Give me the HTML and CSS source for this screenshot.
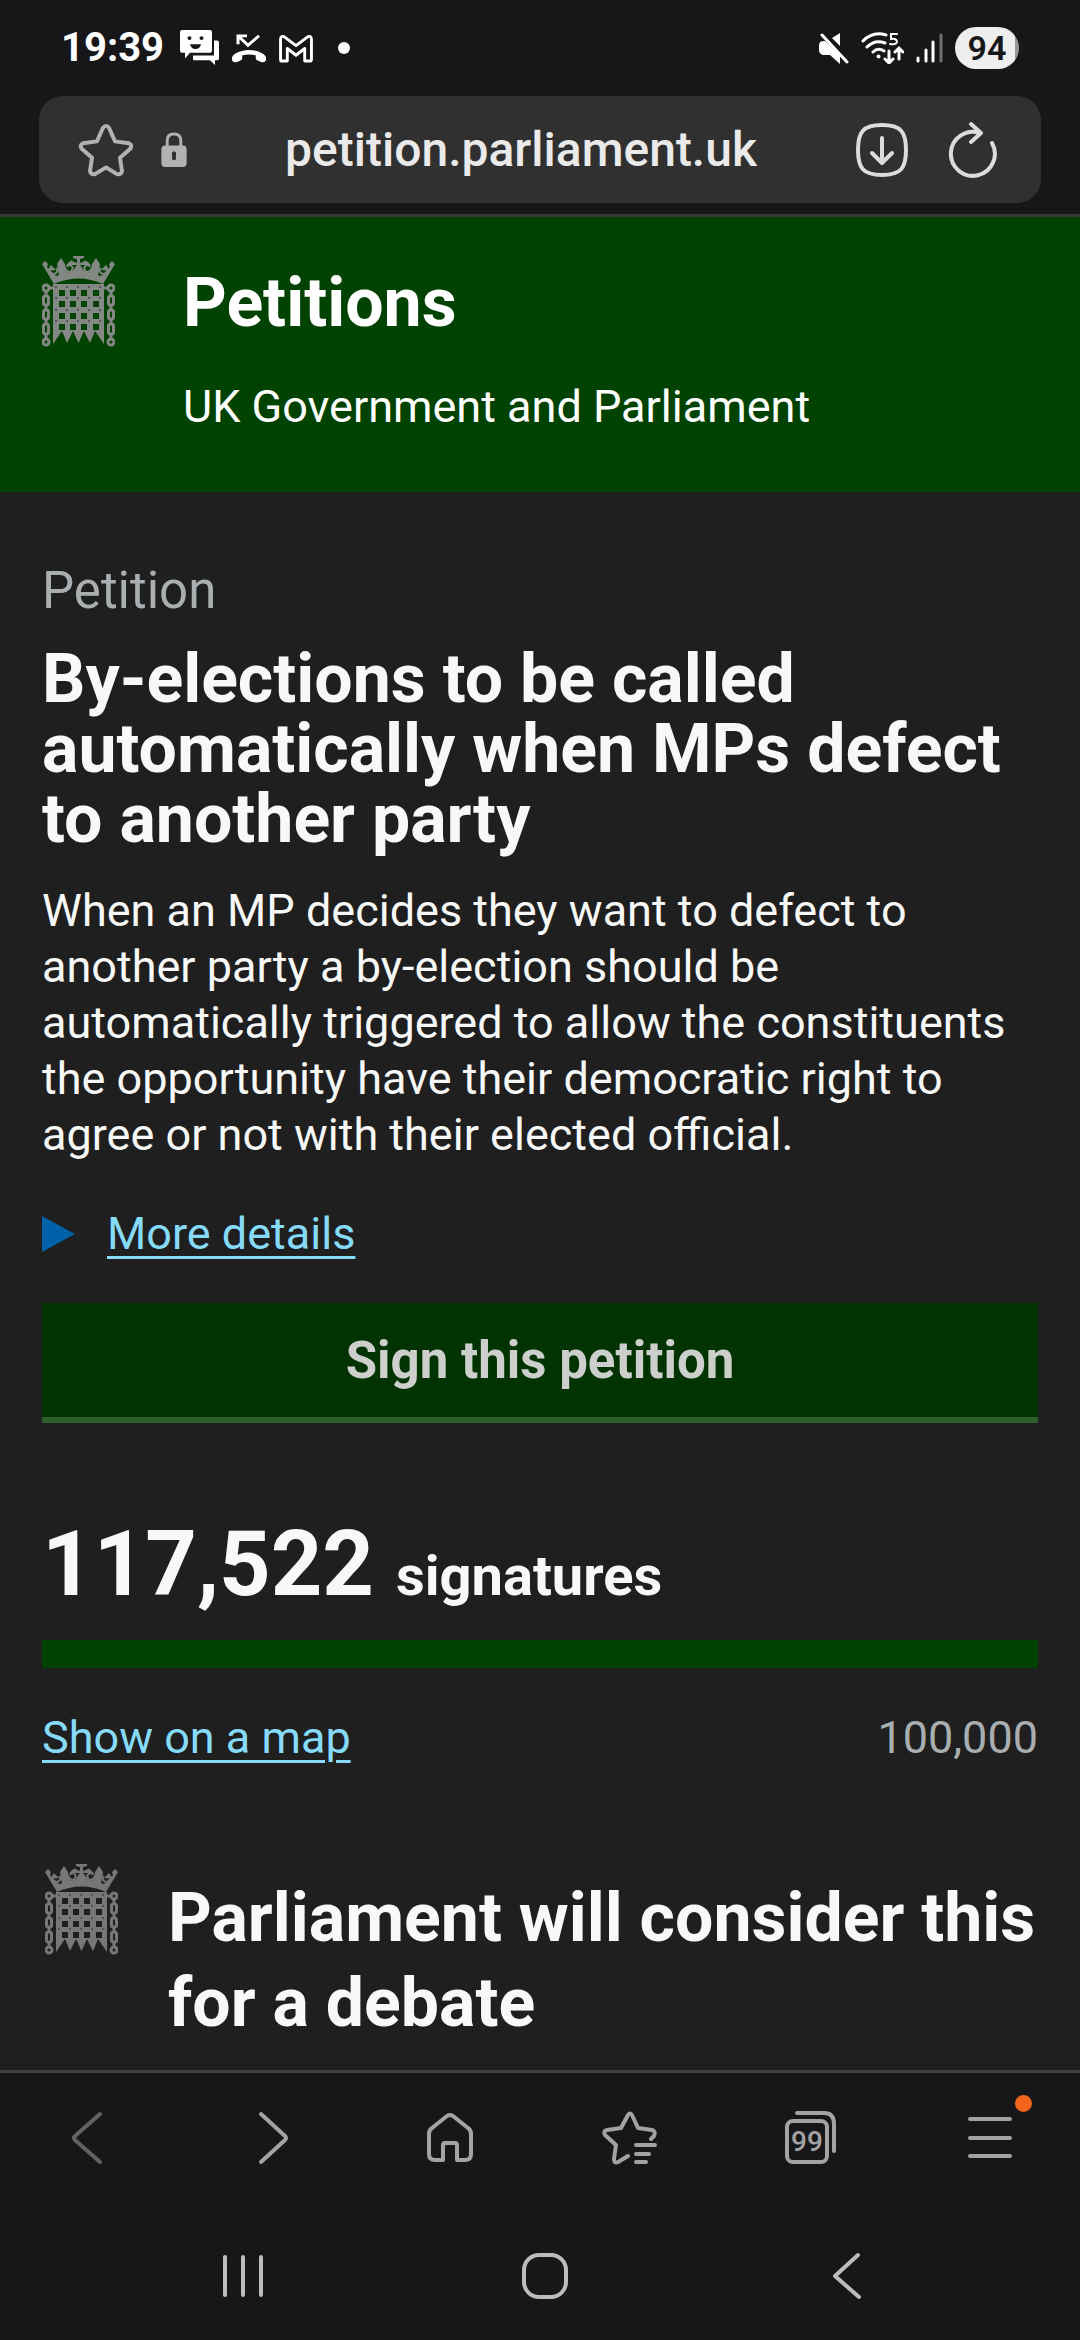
FILE: index.html
```html
<!DOCTYPE html>
<html lang="en">
  <head>
    <meta charset="UTF-8" />
    <meta name="viewport" content="width=device-width, initial-scale=1.0" />
    <title>By-elections to be called automatically - Petitions</title>
    <link rel="stylesheet" href="styles.css">
  </head>
  <body>
    <!-- Shared portcullis crest -->
    <svg class="sprite" aria-hidden="true">
      <symbol id="crest" viewBox="0 0 73 91">
        <!-- Crown -->
        <path d="M12 28 L0 8 L3 5 L6 8 L5 11 L10 18 L15 20 Q24 16 31 15 L34 10 L35 9 L30 9 L30 5 L35 7 L35 3 L31 2 L31 0 H42 V2 L38 3 L38 7 L43 5 V9 L38 9 L39 10 L42 15 Q49 16 58 20 L63 18 L68 11 L67 8 L70 5 L73 8 L61 28 Q36.500 17 12 28Z" />
        <path d="M17 20 L15 8 L19 2 L23 8 L25 18Z M48 18 L50 8 L54 2 L58 8 L56 20Z M5 15 L9 9 L14 14Z M59 14 L64 9 L68 15Z M24 9 L30 4 V11Z M49 9 L43 4 V11Z" />
        <g class="crest-line">
          <path d="M6 13 Q10 20 14 17 Q17 14 14 12 M23 12 Q25 16 28 16 Q32 14 30 10 M25 11 L28 6 M50 12 Q48 16 45 16 Q41 14 43 10 M48 11 L45 6 M67 13 Q63 20 59 17 Q56 14 59 12" />
        </g>
        <!-- Gate -->
        <path fill-rule="evenodd" d="M11 28 H62 V88 L53 75 L48 87 L42 75 L36.500 87 L31 75 L25 87 L20 75 L11 88Z M17 34h6v6h-6z M28 34h6v6h-6z M39 34h6v6h-6z M51 34h6v6h-6z M17 45h6v6h-6z M28 45h6v6h-6z M39 45h6v6h-6z M51 45h6v6h-6z M17 57h6v6h-6z M28 57h6v6h-6z M39 57h6v6h-6z M51 57h6v6h-6z M17 68h6v6h-6z M28 68h6v6h-6z M39 68h6v6h-6z M51 68h6v6h-6z" />
        <path class="crest-rivets" d="M13 31h47M13 42h47M13 54h47M13 65h47" />
        <!-- Chains -->
        <g class="crest-chain">
          <circle cx="4" cy="32" r="3" /><circle cx="4" cy="86" r="3" />
          <circle cx="69" cy="32" r="3" /><circle cx="69" cy="86" r="3" />
          <rect x="1.500" y="40" width="5" height="9" rx="2" /><rect x="1.500" y="54" width="5" height="9" rx="2" /><rect x="1.500" y="68" width="5" height="10" rx="2" />
          <rect x="66.500" y="40" width="5" height="9" rx="2" /><rect x="66.500" y="54" width="5" height="9" rx="2" /><rect x="66.500" y="68" width="5" height="10" rx="2" />
          <path d="M4 35v5M4 49v5M4 63v5M4 78v5M69 35v5M69 49v5M69 63v5M69 78v5M7 32h6M60 32h6" />
        </g>
      </symbol>
    </svg>

    <!-- Status bar -->
    <div class="status-bar">
      <div class="status-left">
        <span class="clock">19:39</span>
        <svg width="40" height="36" viewBox="0 0 40 38" preserveAspectRatio="none" fill="#fff">
          <path d="M2 0h28q2 0 2 2v20q0 2-2 2H10l-5 6v-6H2q-2 0-2-2V2q0-2 2-2z" />
          <path d="M34 11h3q2 0 2 2v17q0 2-2 2h-2v5l-5-5H14q-1 0-1-2v-3h21z" />
          <g fill="#171719"><circle cx="9.500" cy="8.500" r="2" /><circle cx="21.500" cy="8.500" r="2" /><path d="M10 15h11q-1 5-5.500 5t-5.500-5z" /></g>
        </svg>
        <svg width="34" height="30" viewBox="0 0 34 32" preserveAspectRatio="none">
          <path d="M0 29 Q-1 25 3 22 Q17 14 31 22 Q35 25 34 29 Q33 32 29 31 L25 29 Q23 28 24 24 Q17 22 10 24 Q11 28 9 29 L5 31 Q1 32 0 29Z" fill="#fff" />
          <path d="M6 12 V3 H15 M7 4 L16 13 L27 3" fill="none" stroke="#fff" stroke-width="3" />
        </svg>
        <svg width="36" height="29" viewBox="0 0 36 30" fill="none" stroke="#fff" stroke-width="3" stroke-linejoin="round">
          <path d="M3 28 Q2 28 2 26 V6 Q2 1 6 3 L18 12 L30 3 Q34 1 34 6 V26 Q34 28 32 28 H27 V15 L18 22 L9 15 V28Z" />
        </svg>
        <span class="more-dot"></span>
      </div>
      <div class="status-right">
        <svg width="30" height="31" viewBox="0 0 30 31" fill="#fff">
          <path d="M13 5 L21 0 V13Z M1 9 Q2 8 6 8 L21 22 V31 L11 22 H4 Q0 21 0 17 V12Z" />
          <path d="M3 2 L28 29" stroke="#fff" stroke-width="3" stroke-linecap="round" />
        </svg>
        <svg width="43" height="32" viewBox="0 0 43 32" fill="none" stroke="#fff" stroke-width="3" stroke-linecap="round">
          <path d="M2 9 Q12 -1 25 3 M6 15 Q14 7 24 11 M12 20 Q17 15 23 19" />
          <circle cx="17.500" cy="24.500" r="2" fill="#fff" stroke="none" />
          <path d="M28 19 V30 M24 27 L28 31 L32 27 M38 27 V17 M34 20 L38 16 L42 20" />
          <path d="M36 2 H30 V7 Q36 6 36 10 Q35 13 29 12" stroke-width="2" />
        </svg>
        <svg width="27" height="30" viewBox="0 0 27 30" stroke="#fff" stroke-width="3" stroke-linecap="round">
          <path d="M2 25v3M10 17v11M17 9v19" /><path d="M25 2v26" stroke="#707072" />
        </svg>
        <span class="battery">94</span>
      </div>
    </div>

    <!-- Address bar -->
    <header class="browser-top">
      <form class="url-bar">
        <button type="button" class="icon-btn" aria-label="Bookmark">
          <svg width="56" height="54" viewBox="0 0 56 56" preserveAspectRatio="none" fill="none" stroke="#b2b2b2" stroke-width="4" stroke-linejoin="round">
            <path d="M25 5 Q28 1 31 5 L37 19 L51 21 Q55 23 52 27 L42 36 L44 50 Q43 54 39 53 L28 46 L17 53 Q13 54 12 50 L14 36 L4 27 Q1 23 5 21 L19 19Z" />
          </svg>
        </button>
        <svg width="26" height="35" viewBox="0 0 26 36">
          <path d="M6 15 V9 Q6 2 13 2 T20 9 V15" fill="none" stroke="#b2b2b2" stroke-width="3" />
          <rect y="14" width="26" height="22" rx="4" fill="#b2b2b2" />
          <path d="M11 28 V24 Q10 20 13 20 T15 24 V28 Q13 30 11 28Z" fill="#303030" />
        </svg>
        <input class="url-input" type="text" value="petition.parliament.uk" aria-label="Address" />
        <button type="button" class="icon-btn" aria-label="Download">
          <svg width="54" height="54" viewBox="0 0 54 54" fill="none" stroke="#dcdcdc" stroke-width="4" stroke-linecap="round" stroke-linejoin="round">
            <path d="M27 2 C46 2 51 9 51 27 S46 52 27 52 S3 45 3 27 S8 2 27 2Z M27 15 V39 M17 30 L27 40 L37 30" />
          </svg>
        </button>
        <button type="button" class="icon-btn reload" aria-label="Reload">
          <svg width="56" height="58" viewBox="0 0 56 58" fill="none" stroke="#dcdcdc" stroke-width="4" stroke-linecap="round" stroke-linejoin="round">
            <path d="M46 22 A22 22 0 1 1 34 12 M25 3 L35 12 L25 21" />
          </svg>
        </button>
      </form>
    </header>

    <div class="site-header">
      <svg class="crest" aria-hidden="true"><use href="#crest" /></svg>
      <div>
        <p class="site-title">Petitions</p>
        <p class="site-subtitle">UK Government and Parliament</p>
      </div>
    </div>

    <main>
      <p class="kicker">Petition</p>
      <h1>By-elections to be called automatically when MPs defect to another party</h1>
      <p class="summary">When an MP decides they want to defect to another party a by-election should be automatically triggered to allow the constituents the opportunity have their democratic right to agree or not with their elected official.</p>

      <details>
        <summary><span>More details</span></summary>
      </details>

      <button type="button" class="sign-button">Sign this petition</button>

      <p class="count"><strong>117,522</strong> <span>signatures</span></p>
      <progress value="100000" max="100000" aria-label="Signatures"></progress>
      <div class="count-row">
        <a href="#map">Show on a map</a>
        <span>100,000</span>
      </div>

      <section class="debate">
        <svg class="crest" aria-hidden="true"><use href="#crest" /></svg>
        <h2>Parliament will consider this for a debate</h2>
      </section>
    </main>

    <!-- Browser toolbar -->
    <nav class="toolbar">
      <button type="button" aria-label="Back">
        <svg width="56" height="56" viewBox="0 0 56 56"><path d="M38 4 L13 26 Q11 28 13 30 L38 52" /></svg>
      </button>
      <button type="button" aria-label="Forward">
        <svg width="56" height="56" viewBox="0 0 56 56"><path d="M19 4 L43 26 Q45 28 43 30 L19 52" /></svg>
      </button>
      <button type="button" aria-label="Home">
        <svg width="56" height="56" viewBox="0 0 56 56"><path d="M25 6 Q28 4 31 6 L46 18 Q49 20 49 24 V44 Q49 50 43 50 H35 V35 Q35 33 33 33 H23 Q21 33 21 35 V50 H13 Q7 50 7 44 V24 Q7 20 10 18Z" /></svg>
      </button>
      <button type="button" aria-label="Bookmarks">
        <svg width="56" height="56" viewBox="0 0 56 56"><path d="M49 29 L52 26 Q54 21 50 20 L36 18 L30 5 Q28 2 26 5 L19 18 L5 20 Q1 21 3 25 L14 35 L12 49 Q12 54 16 52 L26 46 M34 35 H53 M34 44 H47 M34 52 H44" /></svg>
      </button>
      <button type="button" aria-label="Tabs">
        <span class="tabs">
          <svg width="56" height="56" viewBox="0 0 56 56"><rect x="5" y="11" width="40" height="41" rx="6" /><path d="M15 3 H42 Q52 3 52 14 V41" /></svg>
          <span class="tab-count">99</span>
        </span>
      </button>
      <button type="button" aria-label="Menu">
        <span class="menu">
          <svg width="56" height="56" viewBox="0 0 56 56"><path d="M8 9 H48 M8 28 H48 M8 46 H48" /></svg>
          <span class="badge"></span>
        </span>
      </button>
    </nav>

    <!-- System navigation -->
    <nav class="system-nav">
      <button type="button" aria-label="Recent apps">
        <svg width="48" height="48" viewBox="0 0 48 48"><path d="M6 5V43M24 5V43M42 5V43" /></svg>
      </button>
      <button type="button" aria-label="Home screen">
        <svg width="48" height="48" viewBox="0 0 48 48"><rect x="3" y="3" width="42" height="42" rx="15" /></svg>
      </button>
      <button type="button" aria-label="Go back">
        <svg width="48" height="48" viewBox="0 0 48 48"><path d="M36 3 L13 24 L37 45" /></svg>
      </button>
    </nav>
  </body>
</html>
```
FILE: styles.css
```css
* {
  box-sizing: border-box;
}
body {
  margin: 0;
  min-height: 100vh;
  display: flex;
  flex-direction: column;
  font-family: Roboto, Arial, sans-serif;
  font-size: 45px;
  line-height: 56px;
  color: #f7f8f7;
  background-color: #171719;
}
p,
h1,
h2 {
  margin: 0;
}
svg {
  display: block;
  flex: none;
}
button {
  padding: 0;
  border: none;
  background: none;
  font-family: inherit;
  cursor: pointer;
}
a {
  color: #87dbfa;
  text-decoration-thickness: 3px;
  text-underline-offset: 7px;
}
.sprite {
  position: absolute;
  width: 0;
  height: 0;
}

/* Status bar */
.status-bar {
  display: flex;
  justify-content: space-between;
  align-items: center;
  height: 96px;
  padding: 0 61px;
  color: #fff;
}
.status-left,
.status-right {
  display: flex;
  align-items: center;
  gap: 12px;
}
.clock {
  font-size: 40px;
  font-weight: 700;
  margin-right: 4px;
}
.more-dot {
  width: 12px;
  height: 12px;
  margin-left: 12px;
  border-radius: 50%;
  background-color: #fff;
}
.battery {
  width: 64px;
  border-radius: 22px;
  font-size: 34px;
  font-weight: 600;
  line-height: 42px;
  text-align: center;
  color: #171719;
  background: linear-gradient(to right, #eee 94%, #999 94%);
}

/* Address bar */
.browser-top {
  padding: 0 39px 11px;
  border-bottom: 3px solid #333b33;
}
.url-bar {
  display: flex;
  align-items: center;
  gap: 27px;
  height: 107px;
  margin: 0;
  padding: 0 39px;
  border-radius: 24px;
  background-color: #303030;
}
.url-input {
  flex: 1;
  min-width: 0;
  padding: 0;
  border: none;
  background: none;
  color: #eaeaea;
  font-family: inherit;
  font-size: 48px;
  font-weight: 500;
  text-align: center;
}
.reload {
  margin-left: 10px;
}

/* Site header */
.site-header {
  display: flex;
  gap: 68px;
  padding: 39px 42px 57px;
  color: #fff;
  background-color: #004200;
}
.crest {
  flex: none;
  width: 73px;
  height: 91px;
  fill: #848884;
  stroke: #848884;
  stroke-width: 0;
}
.crest-line,
.crest-chain {
  fill: none;
  stroke-width: 2px;
}
.crest-chain {
  stroke-width: 3px;
}
.crest-rivets {
  stroke: #555;
  stroke-width: 2px;
  stroke-dasharray: 2 9;
}
.site-title {
  margin: 7px 0 36px;
  font-size: 68px;
  font-weight: 700;
  line-height: 80px;
}

/* Petition */
main {
  flex: 1;
  padding: 67px 42px 20px;
  background-color: #1f1f1f;
}
.kicker {
  margin-bottom: 21px;
  font-size: 51px;
  line-height: 64px;
  color: #a9aeb1;
}
h1 {
  font-size: 68px;
  line-height: 70px;
}
.summary {
  margin: 29px 0 43px;
}
summary {
  display: flex;
  align-items: center;
  gap: 32px;
  color: #87dbfa;
  cursor: pointer;
}
summary::before {
  content: "";
  border-style: solid;
  border-width: 18px 0 18px 33px;
  border-color: transparent transparent transparent #0060a8;
}
summary span {
  text-decoration: underline 3px;
  text-underline-offset: 7px;
}
.sign-button {
  display: block;
  width: 100%;
  height: 120px;
  margin: 41px 0 97px;
  border-bottom: 6px solid #2a5f2a;
  font-size: 51px;
  font-weight: 700;
  color: #cccfcc;
  background-color: #003300;
}
.count {
  display: flex;
  align-items: baseline;
  gap: 22px;
  font-size: 56px;
  font-weight: 700;
  line-height: 56px;
}
.count strong {
  font-size: 90px;
  font-weight: 700;
  line-height: 90px;
}
progress {
  display: block;
  width: 100%;
  height: 28px;
  margin: 30px 0 42px;
  border: none;
  appearance: none;
}
progress::-webkit-progress-bar {
  background-color: #333;
}
progress::-webkit-progress-value {
  background-color: #004200;
}
.count-row {
  display: flex;
  justify-content: space-between;
  color: #a9aeb1;
}
.debate {
  display: flex;
  gap: 50px;
  margin-top: 98px;
  padding-left: 3px;
}
.debate .crest {
  fill: #777;
  stroke: #777;
}
.debate h2 {
  margin-top: 12px;
  font-size: 68px;
  line-height: 85px;
}

/* Bottom bars */
.toolbar {
  display: flex;
  height: 133px;
  border-top: 3px solid #404041;
}
.toolbar button,
.system-nav button {
  flex: 1;
  display: flex;
  justify-content: center;
  align-items: center;
}
.toolbar svg {
  fill: none;
  stroke: #a3a3a4;
  stroke-width: 4px;
  stroke-linecap: round;
  stroke-linejoin: round;
}
.toolbar button:first-child svg {
  stroke: #626263;
}
.tabs,
.menu {
  position: relative;
}
.tab-count {
  position: absolute;
  top: 11px;
  left: 5px;
  width: 40px;
  font-size: 28px;
  font-weight: 500;
  line-height: 42px;
  text-align: center;
  color: #a3a3a4;
}
.badge {
  position: absolute;
  top: -15px;
  right: -14px;
  width: 17px;
  height: 17px;
  border-radius: 50%;
  background-color: #f26419;
}
.system-nav {
  display: flex;
  height: 137px;
  padding: 9px 83px 0 92px;
}
.system-nav svg {
  fill: none;
  stroke: #bcbcbd;
  stroke-width: 4px;
  stroke-linecap: round;
  stroke-linejoin: round;
}
```
